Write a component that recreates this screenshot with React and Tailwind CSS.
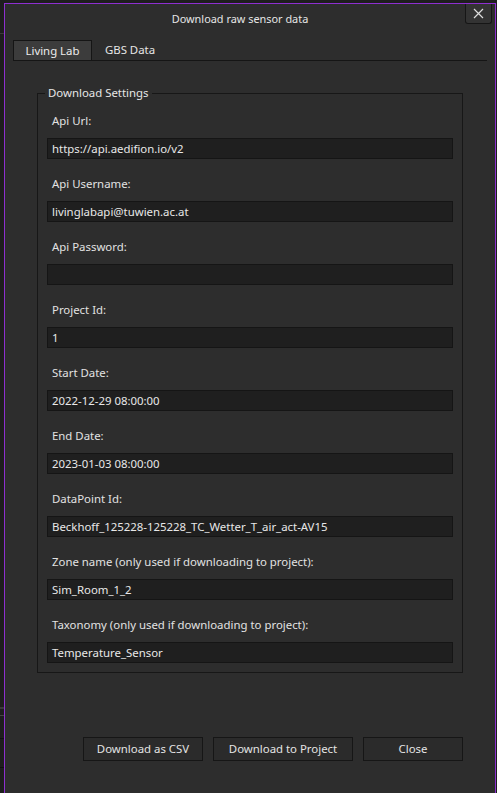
import React from 'react';

const fields = [
  { label: 'Api Url:', value: 'https://api.aedifion.io/v2' },
  { label: 'Api Username:', value: 'livinglabapi@tuwien.ac.at' },
  { label: 'Api Password:', value: '' },
  { label: 'Project Id:', value: '1' },
  { label: 'Start Date:', value: '2022-12-29 08:00:00' },
  { label: 'End Date:', value: '2023-01-03 08:00:00' },
  { label: 'DataPoint Id:', value: 'Beckhoff_125228-125228_TC_Wetter_T_air_act-AV15' },
  { label: 'Zone name (only used if downloading to project):', value: 'Sim_Room_1_2' },
  { label: 'Taxonomy (only used if downloading to project):', value: 'Temperature_Sensor' },
];

function Field({ label, value }) {
  return (
    <div className="flex flex-col">
      <div className="h-[42px] pl-[5px]">
        <div className="mt-[14px] h-[22px] leading-[22px]">{label}</div>
      </div>
      <div className="h-[21px] bg-[#1f1f1f] border border-[#151515] pl-[4px] leading-[19px] text-[#e8e8e8]">
        {value}
      </div>
    </div>
  );
}

function Button({ children, width }) {
  return (
    <button className={`h-[24px] ${width} bg-[#2b2b2b] border border-[#161616] text-[#e4e4e4] leading-[22px]`}>
      {children}
    </button>
  );
}

export default function App() {
  return (
    <div
      className="w-[497px] h-[793px] overflow-hidden bg-[#1e1e1e] flex text-[11.4px] text-[#e2e2e2]"
      style={{ fontFamily: '"Noto Sans", "Open Sans", Arial, sans-serif' }}
    >
      {/* strip of the window behind */}
      <div className="w-[4px] flex flex-col shrink-0">
        <div className="h-[33px]" />
        <div className="h-[1px] bg-[#3a3a3a]" />
        <div className="h-[673px]" />
        <div className="h-[2px] bg-[#3a3a3a]" />
        <div className="h-[6px]" />
        <div className="h-[1px] bg-[#444]" />
        <div className="h-[22px]" />
        <div className="h-[1px] bg-[#111]" />
        <div className="h-[28px]" />
        <div className="h-[1px] bg-[#111]" />
      </div>

      <div className="mt-[3px] w-[492px] h-[800px] shrink-0 border-l border-t border-r border-[#8e2fd0] bg-[#2d2d2d] relative">
        {/* title bar */}
        <div className="h-[30px] flex items-center justify-center pr-[20px] text-[10.9px] text-[#e6e6e6]">
          Download raw sensor data
        </div>
        <button className="absolute right-[3px] top-0 w-[27px] h-[20px] bg-[#333] border border-[#161616] border-t-0 rounded-b-[3px] flex items-center justify-center">
          <svg width="11" height="11" viewBox="0 0 11 11">
            <path d="M1 1 L10 10 M10 1 L1 10" stroke="#dcdcdc" strokeWidth="1.2" />
          </svg>
        </button>

        {/* tabs */}
        <div className="mt-[6px] mx-[8px] flex border-b border-[#151515] h-[21px]">
          <div className="w-[79px] h-[20px] bg-[#3c3c3c] border border-[#151515] border-b-0 flex items-center justify-center text-[#ececec]">
            Living Lab
          </div>
          <div className="w-[76px] h-[20px] flex items-center justify-center text-[#e6e6e6]">GBS Data</div>
        </div>

        {/* tab content */}
        <div className="pl-[32px] pr-[32px] pt-[32px] flex flex-col">
          <div className="relative border border-[#171717] h-[580px] pl-[9px] pr-[9px] pt-[2px] pb-[9px] flex flex-col">
            <div className="absolute left-[7px] -top-[9px] px-[3px] bg-[#2d2d2d] leading-[16px] text-[#e6e6e6]">
              Download Settings
            </div>
            {fields.map((f) => (
              <Field key={f.label} label={f.label} value={f.value} />
            ))}
          </div>

          <div className="mt-[64px] flex justify-end gap-[10px]">
            <Button width="w-[120px]">Download as CSV</Button>
            <Button width="w-[140px]">Download to Project</Button>
            <Button width="w-[100px]">Close</Button>
          </div>
        </div>
      </div>

      <div className="flex-1" />
    </div>
  );
}
